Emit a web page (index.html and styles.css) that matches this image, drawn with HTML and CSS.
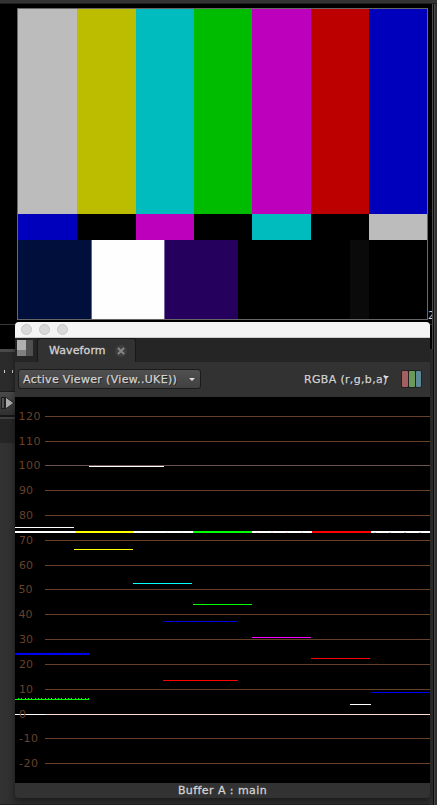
FILE: index.html
```html
<!DOCTYPE html>
<html lang="en">
<head>
<meta charset="utf-8">
<title>Waveform</title>
<link rel="stylesheet" href="styles.css">
</head>
<body>
<div class="app">
  <div class="topbar"></div>
  <div class="viewer">
    <div class="frame">
      <div class="bars main"><i class="gray"></i><i class="yellow"></i><i class="cyan"></i><i class="green"></i><i class="magenta"></i><i class="red"></i><i class="blue"></i></div>
      <div class="bars castellation"><i class="blue"></i><i></i><i class="magenta"></i><i></i><i class="cyan"></i><i></i><i class="gray"></i></div>
      <div class="pluge"><i class="navy"></i><i class="white"></i><i class="purple"></i><i></i><i class="near"></i><i></i></div>
    </div>
    <span class="size-label">2</span>
  </div>
  <div class="status"></div>
  <div class="timeline"><i></i><i></i></div>
  <div class="transport">
    <svg width="15" height="26" viewBox="0 0 15 26"><rect x="1.5" y="5.500" width="3" height="11" fill="#555" stroke="#1b1b1b"/><path d="M5.500 5L14 11L5.500 17Z" fill="#aaa" stroke="#222"/></svg>
  </div>
  <div class="panel-tabs"></div>
  <div class="panel"></div>
  <div class="bottom-line"></div>
</div>
<div class="splitter"></div>
<div class="splitter-lower"></div>

<div class="window">
  <div class="titlebar"><b></b><b></b><b></b></div>
  <div class="tabs">
    <div class="layout-icon"><i></i><i></i><i></i></div>
    <div class="tab"><span>Waveform</span>
      <svg width="12" height="12" viewBox="0 0 12 12"><circle cx="6" cy="6" r="6" fill="#3f3f3f"/><path d="M3 3L9 9M9 3L3 9" stroke="#858585" stroke-width="2"/></svg>
    </div>
  </div>
  <div class="toolbar">
    <div class="select"><span>Active Viewer (View..UKE))</span><em></em></div>
    <div class="channels"><span>RGBA (r,g,b,a)</span><em></em></div>
    <div class="rgb"><i></i><i></i><i></i></div>
  </div>
  <svg class="scope" width="415" height="386" viewBox="0 0 415 386" shape-rendering="crispEdges">
    <path class="grid" d="M30 19.500H415M30 44.500H415M30 68.500H415M30 93.500H415M30 118.500H415M30 143.500H415M30 168.500H415M30 192.500H415M30 217.500H415M30 242.500H415M30 267.500H415M30 292.500H415M30 341.500H415M30 366.500H415"/>
    <path d="M30 68.500H415" stroke="#6d5150"/>
    <path d="M0 317.500H30" stroke="#fff"/><path d="M30 317.500H415" stroke="#ffdcd0"/>
    <g class="labels">
      <text x="3.500" y="23" textLength="22">120</text><text x="3.500" y="48" textLength="22">110</text><text x="3.500" y="72" textLength="22">100</text>
      <text x="4" y="97">90</text><text x="4" y="122">80</text><text x="4" y="147">70</text><text x="4" y="172">60</text><text x="3.500" y="196">50</text><text x="3.500" y="221">40</text><text x="4" y="246">30</text><text x="4" y="271">20</text><text x="4" y="296">10</text><text x="4" y="321">0</text>
      <text x="4" y="345" textLength="19">-10</text><text x="4" y="370" textLength="19">-20</text>
    </g>
    <path d="M0 130.500H59M74 69.500H149M335 307.500H356" stroke="#fff"/>
    <g stroke-width="2">
      <path d="M0 135H60M118 135H178M237 135H297M355 135H415" stroke="#fff"/>
      <path d="M60 135H118" stroke="#ff0"/><path d="M178 135H237" stroke="#0f0"/><path d="M297 135H356" stroke="red"/>
    </g>
    <path d="M121 135.500H178" stroke="#ccffff" stroke-dasharray="2 13"/>
    <path d="M241 135.500H296" stroke="#ffd0f0" stroke-dasharray="2 13"/>
    <path d="M359 135.500H415" stroke="#c8c8ff" stroke-dasharray="2 13"/>
    <path d="M59 152.500H118" stroke="#ff0"/>
    <path d="M118 186.500H177" stroke="#0ff"/>
    <path d="M178 207.500H237" stroke="#0f0"/>
    <path d="M148 224.500H223" stroke="#00d"/>
    <path d="M161 225.500H215" stroke="#006" stroke-dasharray="1 17"/>
    <path d="M237 240.500H296" stroke="#f0f"/>
    <path d="M296 261.500H355M148 283.500H223" stroke="red"/>
    <path d="M0 256.500H74M356 295.500H415" stroke="#00f"/>
    <path d="M0 257.500H74" stroke="#00b"/><path d="M0 257.500H74" stroke="#00f" stroke-dasharray="4 1 2 1"/>
    <path d="M0 302.500H74" stroke="#0f0"/>
    <path d="M3 301.500H74" stroke="#0f0" stroke-dasharray="1 2 1 3 1 2"/>
  </svg>
  <div class="footer">Buffer A : main</div>
</div>
</body>
</html>
```

FILE: styles.css
```css
* { box-sizing: border-box; }
body { margin: 0; width: 437px; height: 805px; overflow: hidden; position: relative; background: #303030; font: 11px "DejaVu Sans", Verdana, sans-serif; color: #d2d2d2; }
i, em, b { display: block; }

.app { display: flex; flex-direction: column; height: 805px; }
.topbar { height: 4px; background: #333; border-bottom: 1px solid #202020; }
.viewer { height: 320px; background: #000; padding: 4px 0 0 17px; position: relative; }
.frame { width: 411px; height: 312px; border: 1px solid #686868; display: flex; flex-direction: column; }
.bars { display: grid; grid-template-columns: 59px 59px 58px 58px 59px 58px 58px; }
.main { height: 205px; }
.castellation { height: 26px; }
.pluge { height: 79px; display: grid; grid-template-columns: 74px 72px 74px 112px 19px 58px; }
.gray { background: #bcbcbc; }
.yellow { background: #bcbc00; }
.cyan { background: #00bcbe; }
.green { background: #00bc00; }
.magenta { background: #bc00bc; }
.red { background: #bc0000; }
.blue { background: #0000bc; }
.navy { background: #000f3b; border-right: 1px solid #5e6588; }
.white { background: #fefefe; }
.purple { background: #25005d; border-left: 1px solid #77679b; }
.near { background: #0a0a0a; }
.size-label { position: absolute; left: 428px; top: 306px; font-size: 10px; }
.status { height: 25px; background: #000; border-top: 1px solid #383838; }
.timeline { height: 42px; background: #2b2b2b; border-top: 3px solid #4a4a4a; padding: 18px 0 0 4px; display: flex; gap: 7px; }
.timeline i { width: 1px; height: 3px; background: #ccc; }
.transport { height: 26px; background: linear-gradient(#4a4a4a, #303030); border-top: 1px solid #1b1b1b; border-bottom: 2px solid #171717; overflow: hidden; }
.panel-tabs { height: 26px; background: #252525; border-top: 2px solid #404040; }
.panel { flex: 1; background: linear-gradient(90deg, #333, #2e2e2e 15px); }
.bottom-line { height: 1px; background: #1f1f1f; }
.splitter { position: absolute; top: 4px; right: 0; width: 5px; height: 801px; background: linear-gradient(90deg, #4c4c4c 1px, #0b0b0b 1px 2px, #4b4b4b 2px 3px, #303030 3px); }
.splitter-lower { position: absolute; top: 349px; left: 430px; width: 3px; height: 456px; background: #303030; }

.window { position: absolute; left: 15px; top: 322px; width: 415px; height: 476px; border-radius: 4px; overflow: hidden; background: #323232; box-shadow: 0 3px 6px rgba(0,0,0,.45); display: flex; flex-direction: column; }
.titlebar { height: 16px; background: #f4f4f4; border-bottom: 1px solid #ccc; display: flex; gap: 7px; padding: 2px 6px; }
.titlebar b { width: 11px; height: 11px; border-radius: 50%; background: #d9d9d9; border: 1px solid #c7c7c7; }
.tabs { height: 24px; background: #252525; display: flex; }
.layout-icon { width: 16px; height: 16px; margin: 2px 4px 0 2px; display: grid; grid-template: 10px 6px / 9px 7px; }
.layout-icon i:nth-child(1) { background: #b0b0b0; }
.layout-icon i:nth-child(2) { background: #505050; grid-row: span 2; }
.layout-icon i:nth-child(3) { background: #808080; }
.tab { width: 99px; background: #323232; border: 1px solid #181818; border-bottom: 0; border-radius: 3px 3px 0 0; display: flex; align-items: center; gap: 9px; padding-left: 11px; }
.tab span { width: 57px; letter-spacing: .1px; white-space: nowrap; -webkit-text-stroke: .3px #d2d2d2; }
.toolbar { height: 35px; display: flex; padding-left: 3px; align-items: flex-start; }
.select { width: 183px; height: 20px; margin-top: 7px; border: 1px solid #1b1b1b; border-radius: 3px; background: linear-gradient(#505050, #414141); display: flex; align-items: center; justify-content: space-between; padding: 0 5px 0 4px; }
.select span, .channels span { white-space: nowrap; -webkit-text-stroke: .25px #d2d2d2; text-shadow: 1px 1px #222; letter-spacing: .33px; }
.toolbar em { width: 0; height: 0; border: 3px solid transparent; border-top-color: #ddd; border-bottom: 0; }
.channels { margin: 7px 0 0 103px; height: 20px; width: 87px; display: flex; align-items: center; }
.channels span { width: 79px; }
.channels em { flex: none; margin-top: -3px; }
.rgb { margin: 8px 0 0 10px; height: 18px; display: flex; background: #222; padding: 1px; gap: 1px; border-radius: 2px; }
.rgb i { width: 6px; background: #a26061; border-radius: 1px; }
.rgb i:nth-child(2) { background: #6b9958; }
.rgb i:nth-child(3) { background: #5c8898; width: 5px; }
.scope { display: block; background: #000; flex: none; }
.grid { stroke: #67402a; }
.labels { fill: #67402a; font-size: 11px; }
.footer { height: 15px; line-height: 15px; text-align: center; letter-spacing: .43px; -webkit-text-stroke: .3px #d2d2d2; }
```
